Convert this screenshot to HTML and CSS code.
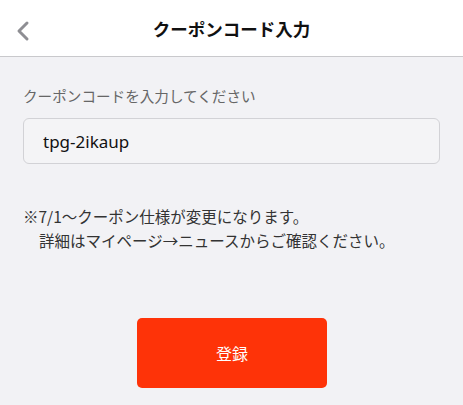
FILE: index.html
```html
<!DOCTYPE html>
<html lang="ja">

<head>
    <meta charset="UTF-8">
    <meta name="viewport" content="width=device-width, initial-scale=1.0">
    <title>クーポンコード入力</title>
    <link rel="stylesheet" href="styles.css">
</head>

<body>

    <header class="header">
        <a class="header__back" href="#">
            <svg width="14" height="22" viewBox="0 0 14 22">
                <path d="M11 3 L3 11 L11 19" fill="none" stroke="#8e8e93" stroke-width="3" stroke-linecap="round" stroke-linejoin="round"/>
            </svg>
        </a>
        <h1 class="header__title">クーポンコード入力</h1>
    </header>

    <main class="coupon">
        <label class="coupon__label" for="code">クーポンコードを入力してください</label>
        <input class="coupon__input" type="text" id="code" value="tpg-2ikaup">

        <p class="coupon__note">
            ※7/1～クーポン仕様が変更になります。<br>
            <span class="coupon__indent">詳細はマイページ→ニュースからご確認ください。</span>
        </p>

        <div class="coupon__actions">
            <button class="coupon__btn" type="button">登録</button>
        </div>
    </main>

</body>

</html>
```

FILE: styles.css
```css
* {
    margin: 0;
    padding: 0;
    box-sizing: border-box;
}

:root {
    --bg: #f2f2f5;
    --text: #333;
    --red: #fe3308;
}

body {
    font-family: "Noto Sans CJK JP", "Noto Sans", sans-serif;
    background: var(--bg);
    color: var(--text);
    width: 463px;
    height: 405px;
    overflow: hidden;
}

.header {
    position: relative;
    height: 57px;
    background: #fff;
    border-bottom: 1px solid #c9c9cc;
    display: flex;
    align-items: center;
    justify-content: center;
}

.header__back {
    position: absolute;
    left: 16px;
    top: 20px;
    display: block;
    width: 14px;
    height: 22px;
}

.header__back svg {
    display: block;
}

.header__title {
    font-size: 17.5px;
    font-weight: 700;
    color: #111;
    line-height: 24px;
    margin-top: 1px;
}

.coupon {
    padding: 28px 23px 0;
    display: flex;
    flex-direction: column;
}

.coupon__label {
    font-size: 14.6px;
    line-height: 22px;
    color: #666;
}

.coupon__input {
    margin-top: 11px;
    height: 46px;
    width: 100%;
    border: 1px solid #d2d2d6;
    border-radius: 6px;
    background: #f4f4f6;
    padding: 0 19px;
    font-family: "Noto Sans", sans-serif;
    font-size: 17px;
    color: #111;
    outline: none;
}

.coupon__note {
    margin-top: 40px;
    font-size: 15.5px;
    line-height: 24px;
    color: var(--text);
}

.coupon__indent {
    padding-left: 16px;
}

.coupon__actions {
    margin-top: 66px;
    display: flex;
    justify-content: center;
}

.coupon__btn {
    width: 190px;
    height: 70px;
    border: none;
    border-radius: 5px;
    background: var(--red);
    color: #fff;
    font-family: "Noto Sans CJK JP", sans-serif;
    font-size: 16px;
    margin-left: 1px;
}
```
